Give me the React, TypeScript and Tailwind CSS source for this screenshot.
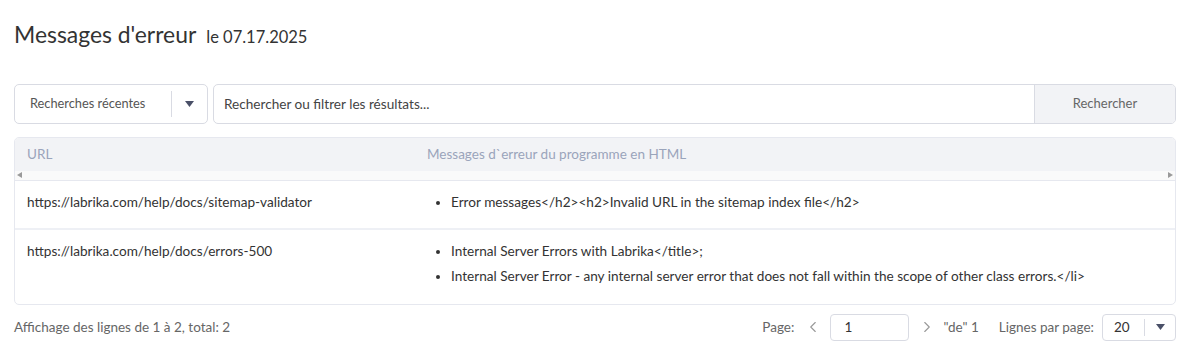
import { ChevronLeft, ChevronRight } from 'lucide-react';

const rows = [
  {
    url: 'https://labrika.com/help/docs/sitemap-validator',
    messages: ['Error messages</h2><h2>Invalid URL in the sitemap index file</h2>'],
  },
  {
    url: 'https://labrika.com/help/docs/errors-500',
    messages: [
      'Internal Server Errors with Labrika</title>;',
      'Internal Server Error - any internal server error that does not fall within the scope of other class errors.</li>',
    ],
  },
];

function Caret() {
  return (
    <svg width="9" height="6" viewBox="0 0 9 6" className="fill-[#4a5068]">
      <path d="M0 0h9L4.5 6z" />
    </svg>
  );
}

export default function App() {
  return (
    <div className="bg-white min-h-[353px] pl-[14px] pr-[13px] text-[#333] font-['Lato','Noto_Sans',sans-serif]">
      {/* title */}
      <div className="pt-[19px] flex items-baseline gap-[10px]">
        <h1 className="text-[22.9px] leading-[30px] text-[#333]">Messages d'erreur</h1>
        <span className="text-[16.5px] text-[#333]">le 07.17.2025</span>
      </div>

      {/* search row */}
      <div className="mt-[34px] flex gap-[5px] h-[40px]">
        <div className="w-[194px] border border-[#d9dbe3] rounded-[5px] flex items-center">
          <span className="flex-1 pl-[15px] text-[12.8px] text-[#555]">Recherches récentes</span>
          <span className="w-px h-[26px] bg-[#d9dbe3]" />
          <span className="w-[35px] flex justify-center">
            <Caret />
          </span>
        </div>
        <div className="flex-1 border border-[#d9dbe3] rounded-[5px] flex overflow-hidden">
          <input
            className="flex-1 px-[10px] text-[13.6px] outline-none placeholder:text-[#444]"
            placeholder="Rechercher ou filtrer les résultats..."
          />
          <button className="w-[141px] bg-[#f2f3f6] border-l border-[#d9dbe3] text-[13px] text-[#666]">
            Rechercher
          </button>
        </div>
      </div>

      {/* table */}
      <div className="mt-[13px] border border-[#e6e8ef] rounded-[5px] overflow-hidden">
        <div className="bg-[#f2f3f6] h-[33px] flex items-center text-[13.5px] text-[#9aa4bb]">
          <div className="w-[400px] pl-[12px]">URL</div>
          <div className="flex-1 pl-[12px]">Messages d`erreur du programme en HTML</div>
        </div>
        <div className="h-[10px] bg-[#fafafa] flex items-center justify-between px-[2px] border-b border-[#e6e8ef]">
          <svg width="5" height="6" viewBox="0 0 5 6" className="fill-[#9a9a9a]"><path d="M5 0v6L0 3z" /></svg>
          <svg width="5" height="6" viewBox="0 0 5 6" className="fill-[#9a9a9a]"><path d="M0 0v6l5-3z" /></svg>
        </div>
        {rows.map((r, i) => (
          <div key={i} className={`flex text-[13.6px] ${i > 0 ? 'border-t-2 border-[#eef0f5] pb-[2px]' : ''}`}>
            <div className="w-[400px] pl-[12px] pt-[9px] pb-[13px] leading-[25px]">{r.url}</div>
            <ul className="flex-1 pl-[36px] pt-[9px] pb-[13px] list-disc leading-[25px] marker:text-[#333]">
              {r.messages.map((m, j) => (
                <li key={j}>{m}</li>
              ))}
            </ul>
          </div>
        ))}
      </div>

      {/* footer */}
      <div className="mt-[9px] flex items-center justify-between text-[13.5px] text-[#666]">
        <span>Affichage des lignes de 1 à 2, total: 2</span>
        <div className="flex items-center">
          <span>Page:</span>
          <ChevronLeft size={18} strokeWidth={1.5} className="ml-[10px] text-[#999]" />
          <div className="ml-[8px] w-[79px] h-[27px] border border-[#d9dbe3] rounded-[4px] flex items-center pl-[13px] text-[#333]">1</div>
          <ChevronRight size={18} strokeWidth={1.5} className="ml-[9px] text-[#999]" />
          <span className="ml-[7px]">"de" 1</span>
          <span className="ml-[20px]">Lignes par page:</span>
          <div className="ml-[8px] w-[74px] h-[27px] border border-[#d9dbe3] rounded-[4px] flex items-center">
            <span className="flex-1 pl-[11px] text-[#333]">20</span>
            <span className="w-px h-[17px] bg-[#d9dbe3]" />
            <span className="w-[30px] flex justify-center"><Caret /></span>
          </div>
        </div>
      </div>
    </div>
  );
}
